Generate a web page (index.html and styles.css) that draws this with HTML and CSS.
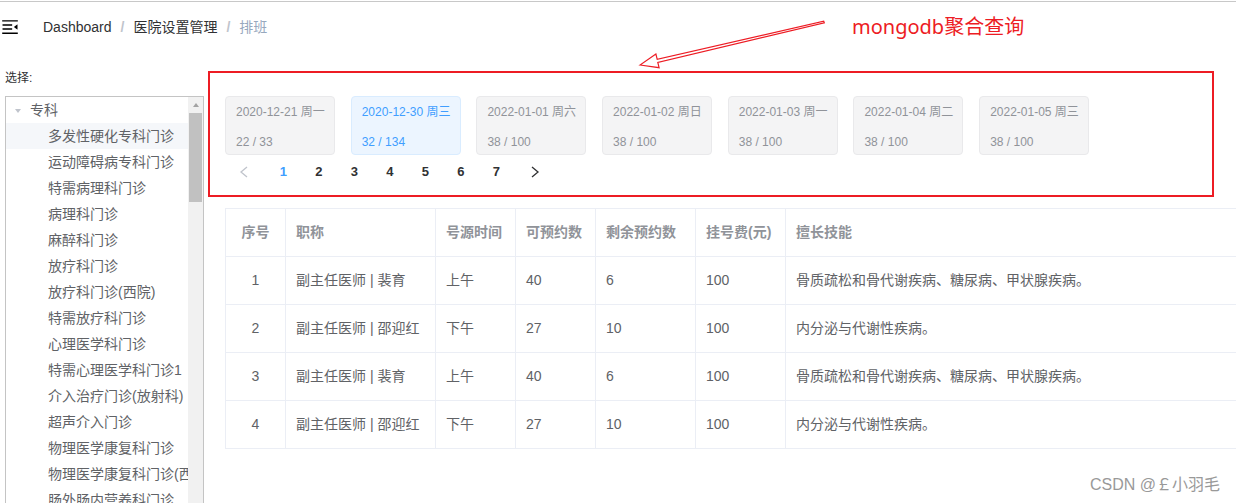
FILE: index.html
```html
<!DOCTYPE html>
<html lang="zh-CN">
<head>
<meta charset="utf-8">
<title>排班</title>
<link rel="stylesheet" href="styles.css">
</head>
<body>
<div class="page">
  <header class="navbar">
    <svg class="hamburger" viewBox="0 0 1024 1024" width="20" height="20" aria-hidden="true">
      <path d="M408 442h480c4.4 0 8-3.6 8-8v-56c0-4.4-3.6-8-8-8H408c-4.4 0-8 3.6-8 8v56c0 4.4 3.6 8 8 8zm-8 204c0 4.4 3.6 8 8 8h480c4.4 0 8-3.6 8-8v-56c0-4.4-3.6-8-8-8H408c-4.4 0-8 3.6-8 8v56zm504-486H120c-4.4 0-8 3.6-8 8v56c0 4.4 3.6 8 8 8h784c4.4 0 8-3.6 8-8v-56c0-4.4-3.6-8-8-8zm0 632H120c-4.4 0-8 3.6-8 8v56c0 4.4 3.6 8 8 8h784c4.4 0 8-3.6 8-8v-56c0-4.4-3.6-8-8-8zM142.4 642.1L298.7 519a8.84 8.84 0 0 0 0-13.9L142.4 381.9c-5.8-4.6-14.4-.5-14.4 6.9v246.3a8.9 8.9 0 0 0 14.4 7z"/>
    </svg>
    <nav class="breadcrumb">
      <span class="crumb">Dashboard</span><span class="sep">/</span><span class="crumb">医院设置管理</span><span class="sep">/</span><span class="crumb current">排班</span>
    </nav>
  </header>

  <div class="app-main">
    <aside class="sidebar">
      <div class="label">选择:</div>
      <div class="tree-box">
        <ul class="tree">
          <li class="node root"><span class="caret"></span><span>专科</span></li>
          <li class="node child current">多发性硬化专科门诊</li>
          <li class="node child">运动障碍病专科门诊</li>
          <li class="node child">特需病理科门诊</li>
          <li class="node child">病理科门诊</li>
          <li class="node child">麻醉科门诊</li>
          <li class="node child">放疗科门诊</li>
          <li class="node child">放疗科门诊(西院)</li>
          <li class="node child">特需放疗科门诊</li>
          <li class="node child">心理医学科门诊</li>
          <li class="node child">特需心理医学科门诊1</li>
          <li class="node child">介入治疗门诊(放射科)</li>
          <li class="node child">超声介入门诊</li>
          <li class="node child">物理医学康复科门诊</li>
          <li class="node child">物理医学康复科门诊(西院)</li>
          <li class="node child">肠外肠内营养科门诊</li>
          <li class="node child">临床营养科门诊</li>
        </ul>
        <div class="scrollbar">
          <div class="sb-up"><span class="sb-arrow"></span></div>
          <div class="sb-thumb"></div>
        </div>
      </div>
    </aside>

    <main class="content">
      <div class="cards">
        <div class="card"><div class="line">2020-12-21 周一</div><div class="line">22 / 33</div></div>
        <div class="card active"><div class="line">2020-12-30 周三</div><div class="line">32 / 134</div></div>
        <div class="card"><div class="line">2022-01-01 周六</div><div class="line">38 / 100</div></div>
        <div class="card"><div class="line">2022-01-02 周日</div><div class="line">38 / 100</div></div>
        <div class="card"><div class="line">2022-01-03 周一</div><div class="line">38 / 100</div></div>
        <div class="card"><div class="line">2022-01-04 周二</div><div class="line">38 / 100</div></div>
        <div class="card"><div class="line">2022-01-05 周三</div><div class="line">38 / 100</div></div>
      </div>

      <div class="pagination">
        <button class="btn-prev" type="button" aria-label="上一页">
          <svg viewBox="0 0 12 12" width="12" height="12"><polyline points="8,1 2,6 8,11"/></svg>
        </button>
        <ul class="pager">
          <li class="active">1</li>
          <li>2</li>
          <li>3</li>
          <li>4</li>
          <li>5</li>
          <li>6</li>
          <li>7</li>
        </ul>
        <button class="btn-next" type="button" aria-label="下一页">
          <svg viewBox="0 0 12 12" width="12" height="12"><polyline points="2,1 8,6 2,11"/></svg>
        </button>
      </div>

      <table class="schedule">
        <thead>
          <tr>
            <th class="c-idx">序号</th>
            <th class="c-title">职称</th>
            <th class="c-time">号源时间</th>
            <th class="c-avail">可预约数</th>
            <th class="c-left">剩余预约数</th>
            <th class="c-fee">挂号费(元)</th>
            <th class="c-skill">擅长技能</th>
          </tr>
        </thead>
        <tbody>
          <tr>
            <td class="c-idx">1</td><td>副主任医师 | 裴育</td><td>上午</td><td>40</td><td>6</td><td>100</td><td>骨质疏松和骨代谢疾病、糖尿病、甲状腺疾病。</td>
          </tr>
          <tr>
            <td class="c-idx">2</td><td>副主任医师 | 邵迎红</td><td>下午</td><td>27</td><td>10</td><td>100</td><td>内分泌与代谢性疾病。</td>
          </tr>
          <tr>
            <td class="c-idx">3</td><td>副主任医师 | 裴育</td><td>上午</td><td>40</td><td>6</td><td>100</td><td>骨质疏松和骨代谢疾病、糖尿病、甲状腺疾病。</td>
          </tr>
          <tr>
            <td class="c-idx">4</td><td>副主任医师 | 邵迎红</td><td>下午</td><td>27</td><td>10</td><td>100</td><td>内分泌与代谢性疾病。</td>
          </tr>
        </tbody>
      </table>
    </main>
  </div>

  <div class="annot-box"></div>
  <svg class="annot-arrow" viewBox="630 10 200 65" width="200" height="65" aria-hidden="true">
    <polygon points="640,65 659.1,67.7 657.8,62.4 824.3,22.8 823.7,21.2 657.2,59.4 655.9,54.1"/>
  </svg>
  <div class="annot-text">mongodb聚合查询</div>
  <div class="watermark">CSDN @￡小羽毛</div>
</div>
</body>
</html>
```

FILE: styles.css
```css
* {
  box-sizing: border-box;
}

html,
body {
  margin: 0;
  padding: 0;
  background: #ffffff;
}

body {
  font-family: "Liberation Sans", "Noto Sans CJK SC", sans-serif;
  color: #606266;
}

.page {
  position: relative;
  width: 1236px;
  height: 503px;
  overflow: hidden;
  padding-top: 1px;
}

/* ---------- navbar ---------- */
.navbar {
  height: 51px;
  border-top: 1px solid #c8c8c8;
  display: flex;
  align-items: center;
}

.hamburger {
  flex: none;
  fill: #000000;
  transform: rotate(180deg);
}

.breadcrumb {
  margin-left: 23px;
  font-size: 14px;
  line-height: 50px;
  white-space: nowrap;
}

.crumb {
  color: #303133;
}

.crumb.current {
  color: #97a8be;
}

.sep {
  margin: 0 9px;
  font-weight: 700;
  color: #c0c4cc;
}

/* ---------- main area ---------- */
.app-main {
  display: flex;
  padding: 17px 0 0 5px;
}

.sidebar {
  flex: none;
  width: 199px;
}

.label {
  font-size: 12px;
  line-height: 18px;
  color: #303133;
}

.tree-box {
  margin-top: 9px;
  height: 430px;
  border: 1px solid #c4c4c4;
  display: flex;
}

.tree {
  flex: 1;
  min-width: 0;
  overflow: hidden;
  list-style: none;
  margin: 0;
  padding: 0;
}

.node {
  height: 26px;
  line-height: 26px;
  font-size: 14px;
  color: #606266;
  white-space: nowrap;
  overflow: hidden;
}

.node.root {
  display: flex;
  align-items: center;
}

.node.child {
  padding-left: 42px;
}

.node.current {
  background: #f5f7fa;
}

.caret {
  flex: none;
  width: 24px;
  height: 26px;
  position: relative;
}

.caret::after {
  content: "";
  position: absolute;
  left: 9px;
  top: 12px;
  border-left: 3.5px solid transparent;
  border-right: 3.5px solid transparent;
  border-top: 4px solid #c0c4cc;
}

.scrollbar {
  flex: none;
  width: 15px;
  background: #f1f1f1;
  display: flex;
  flex-direction: column;
}

.sb-up {
  height: 16px;
  display: flex;
  align-items: center;
  justify-content: center;
}

.sb-arrow {
  width: 0;
  height: 0;
  border-left: 3.5px solid transparent;
  border-right: 3.5px solid transparent;
  border-bottom: 4px solid #a3a3a3;
}

.sb-thumb {
  height: 89px;
  margin: 0 1px;
  background: #c1c1c1;
}

/* ---------- content ---------- */
.content {
  flex: 1;
  min-width: 0;
  margin-left: 21px;
  padding-top: 27px;
}

.cards {
  display: flex;
  gap: 15.7px;
}

.card {
  flex: none;
  width: 110px;
  height: 59px;
  padding: 5px 10px 2px;
  border: 1px solid #e9e9eb;
  border-radius: 4px;
  background: #f4f4f5;
  color: #909399;
  font-size: 12px;
}

.card .line {
  line-height: 20px;
  white-space: nowrap;
}

.card .line + .line {
  margin-top: 10px;
}

.card.active {
  background: #ecf5ff;
  border-color: #d9ecff;
  color: #409eff;
}

.pagination {
  margin-top: 3px;
  padding-left: 5px;
  height: 28px;
  display: flex;
  align-items: center;
}

.btn-prev,
.btn-next {
  flex: none;
  width: 35.5px;
  height: 28px;
  border: none;
  background: transparent;
  display: flex;
  align-items: center;
  padding: 0;
}

.btn-prev {
  padding-left: 9px;
}

.btn-next {
  padding-left: 16px;
}

.btn-prev svg,
.btn-next svg {
  fill: none;
  stroke-width: 1.3;
}

.btn-prev svg {
  stroke: #c0c4cc;
}

.btn-next svg {
  stroke: #303133;
}

.pager {
  display: flex;
  list-style: none;
  margin: 0;
  padding: 0;
}

.pager li {
  width: 35.5px;
  height: 28px;
  line-height: 28px;
  text-align: center;
  font-size: 13px;
  font-weight: 700;
  color: #303133;
}

.pager li.active {
  color: #409eff;
}

.schedule {
  margin-top: 22px;
  width: 1040px;
  table-layout: fixed;
  border-collapse: separate;
  border-spacing: 0;
  border-top: 1px solid #ebeef5;
  border-left: 1px solid #ebeef5;
  font-size: 14px;
}

.schedule th,
.schedule td {
  padding: 12px 10px;
  line-height: 23px;
  border-right: 1px solid #ebeef5;
  border-bottom: 1px solid #ebeef5;
  text-align: left;
  white-space: nowrap;
  overflow: hidden;
}

.schedule th {
  color: #909399;
  font-weight: 700;
}

.schedule td {
  color: #606266;
}

.schedule .c-idx {
  text-align: center;
}

.schedule th.c-idx { width: 60px; }
.schedule th.c-title { width: 150px; }
.schedule th.c-time { width: 80px; }
.schedule th.c-avail { width: 80px; }
.schedule th.c-left { width: 100px; }
.schedule th.c-fee { width: 90px; }

/* ---------- annotations (overlay) ---------- */
.annot-box {
  position: absolute;
  left: 208px;
  top: 71px;
  width: 1006px;
  height: 126px;
  border: 2px solid #ed1c24;
  pointer-events: none;
}

.annot-arrow {
  position: absolute;
  left: 630px;
  top: 10px;
  fill: #ffffff;
  stroke: #ed1c24;
  stroke-width: 1.2;
  stroke-linejoin: miter;
}

.annot-text {
  position: absolute;
  left: 852px;
  top: 13px;
  font-family: "Noto Sans", "Noto Sans CJK SC", sans-serif;
  font-size: 20px;
  line-height: 28px;
  color: #ed1c24;
  white-space: nowrap;
}

.watermark {
  position: absolute;
  right: 16px;
  top: 475px;
  font-size: 16px;
  line-height: 20px;
  color: #999999;
  white-space: nowrap;
}
```
